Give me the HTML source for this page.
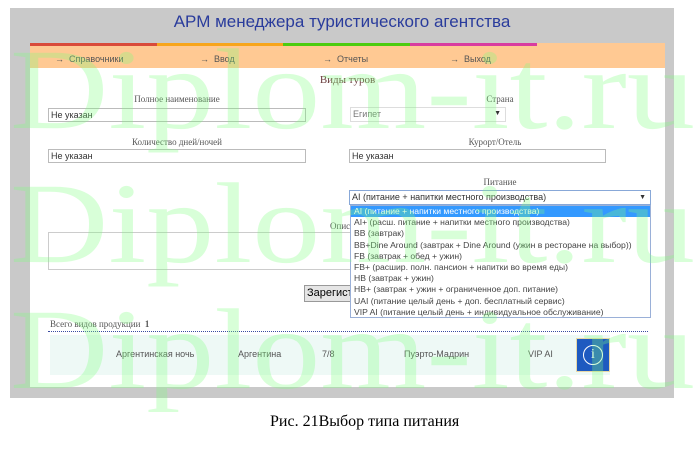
<!DOCTYPE html><html><head><meta charset="utf-8"><style>
body{margin:0;width:695px;height:449px;background:#fff;position:relative;overflow:hidden;font-family:"Liberation Sans",sans-serif}
.a{position:absolute}
.lbl{font-family:"Liberation Serif",serif;font-size:9px;color:#555;text-align:center}
.inp{border:1px solid #bbb;background:#fff;font-size:9px;color:#333;padding-left:2px;line-height:12px;box-sizing:border-box}
.nav{font-size:9px;color:#555}
.opt{font-size:8.6px;color:#444;line-height:11.2px;padding-left:3px;white-space:nowrap}
</style></head><body>
<div class="a" style="left:10px;top:8px;width:664px;height:390px;background:#c9c9c9"></div>
<div class="a" style="left:10px;top:12px;width:664px;text-align:center;font-size:17px;color:#2a3c9c">АРМ менеджера туристического агентства</div>
<div class="a" style="left:30px;top:43px;width:635px;height:344px;background:#fff"></div>
<div class="a" style="left:30px;top:43px;width:635px;height:25px;background:#ffc993"></div>
<div class="a" style="left:30px;top:43px;width:127px;height:3px;background:#d94a3a"></div>
<div class="a" style="left:157px;top:43px;width:126px;height:3px;background:#f7a51c"></div>
<div class="a" style="left:283px;top:43px;width:127px;height:3px;background:#4ccc10"></div>
<div class="a" style="left:410px;top:43px;width:127px;height:3px;background:#d93ca0"></div>
<div class="a nav" style="left:55px;top:54px">→&nbsp; Справочники</div>
<div class="a nav" style="left:200px;top:54px">→&nbsp; Ввод</div>
<div class="a nav" style="left:323px;top:54px">→&nbsp; Отчеты</div>
<div class="a nav" style="left:450px;top:54px">→&nbsp; Выход</div>
<div class="a" style="left:30px;top:74px;width:635px;text-align:center;font-family:'Liberation Serif',serif;font-size:11px;color:#6a3c3c">Виды туров</div>
<div class="a lbl" style="left:48px;top:94px;width:258px">Полное наименование</div>
<div class="a lbl" style="left:470px;top:94px;width:60px">Страна</div>
<div class="a inp" style="left:48px;top:108px;width:258px;height:14px">Не указан</div>
<div class="a inp" style="left:350px;top:107px;width:156px;height:15px;color:#777;border-color:#ddd">Египет<span style="float:right;margin-right:4px;font-size:7px;color:#333">▼</span></div>
<div class="a lbl" style="left:48px;top:137px;width:258px">Количество дней/ночей</div>
<div class="a lbl" style="left:440px;top:137px;width:110px">Курорт/Отель</div>
<div class="a inp" style="left:48px;top:149px;width:258px;height:14px">Не указан</div>
<div class="a inp" style="left:349px;top:149px;width:257px;height:14px">Не указан</div>
<div class="a lbl" style="left:460px;top:177px;width:80px">Питание</div>
<div class="a lbl" style="left:330px;top:221px;width:30px;text-align:left">Опис</div>
<div class="a" style="left:48px;top:232px;width:600px;height:36px;border:1px solid #ccc"></div>
<div class="a" style="left:304px;top:285px;width:60px;height:15px;background:#e5e5e5;border:1px solid #999;font-size:11px;line-height:15px;padding-left:2px">Зарегистр</div>
<div class="a inp" style="left:349px;top:190px;width:302px;height:15px;border-color:#88a8d8;line-height:13px">AI (питание + напитки местного производства)<span style="float:right;margin-right:4px;font-size:7px;color:#333">▼</span></div>
<div class="a" style="left:350px;top:205px;width:301px;height:113px;background:#fff;border:1px solid #9ab0d8;box-sizing:border-box">
<div class="opt" style="background:#3399ff;color:#fff">AI (питание + напитки местного производства)</div>
<div class="opt">AI+ (расш. питание + напитки местного производства)</div>
<div class="opt">BB (завтрак)</div>
<div class="opt">BB+Dine Around (завтрак + Dine Around (ужин в ресторане на выбор))</div>
<div class="opt">FB (завтрак + обед + ужин)</div>
<div class="opt">FB+ (расшир. полн. пансион + напитки во время еды)</div>
<div class="opt">HB (завтрак + ужин)</div>
<div class="opt">HB+ (завтрак + ужин + ограниченное доп. питание)</div>
<div class="opt">UAI (питание целый день + доп. бесплатный сервис)</div>
<div class="opt">VIP AI (питание целый день + индивидуальное обслуживание)</div>
</div>
<div class="a" style="left:50px;top:319px;font-family:'Liberation Serif',serif;font-size:9px;color:#555">Всего видов продукции &nbsp;<b>1</b></div>
<div class="a" style="left:48px;top:331px;width:600px;border-top:1px dotted #3a4aa0"></div>
<div class="a" style="left:50px;top:335px;width:560px;height:40px;background:#eef9f6"></div>
<div class="a nav" style="left:116px;top:349px">Аргентинская ночь</div>
<div class="a nav" style="left:238px;top:349px">Аргентина</div>
<div class="a nav" style="left:322px;top:349px">7/8</div>
<div class="a nav" style="left:404px;top:349px">Пуэрто-Мадрин</div>
<div class="a nav" style="left:528px;top:349px">VIP AI</div>
<div class="a" style="left:576px;top:338px;width:32px;height:32px;background:#1e5ac0;border:1px solid #e8d8a8"><div style="margin:6px;width:18px;height:18px;border:1.5px solid #fff;border-radius:50%;color:#fff;font-family:'Liberation Serif',serif;font-size:14px;text-align:center;line-height:18px">i</div></div>
<svg class="a" style="left:0;top:0" width="695" height="449">
<g fill="#7dff7d" fill-opacity="0.3" font-family="Liberation Serif" font-size="115">
<text x="10" y="128" textLength="685" lengthAdjust="spacingAndGlyphs">Diplom-it.ru</text>
<text x="10" y="262" textLength="685" lengthAdjust="spacingAndGlyphs">Diplom-it.ru</text>
<text x="10" y="388" textLength="685" lengthAdjust="spacingAndGlyphs">Diplom-it.ru</text>
</g></svg>
<div class="a" style="left:0;top:412px;width:695px;background:#fff;height:37px"></div>
<div class="a" style="left:270px;top:413px;font-family:'Liberation Serif',serif;font-size:16px;color:#000">Рис. 21Выбор типа питания</div>
</body></html>
